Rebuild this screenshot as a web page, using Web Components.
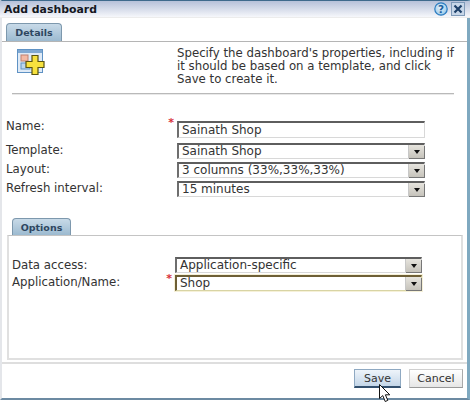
<!DOCTYPE html>
<html><head><meta charset="utf-8"><title>Add dashboard</title>
<style>
html,body{margin:0;padding:0;background:#fff}
body{font:11.75px/13px "DejaVu Sans",sans-serif;color:#3a3a3a;width:470px;height:402px;overflow:hidden}
</style></head><body>
<x-dialog>
  <x-titlebar slot="title">Add dashboard</x-titlebar>
  <x-tabpanel label="Details" variant="outer">
    <x-intro>Specify the dashboard's properties, including if it should be based on a template, and click Save to create it.</x-intro>
    <x-form style="--top:26px;--gap:3px;--col:171px;--w:248px;--pl:4px">
      <x-field label="Name:" required kind="input" value="Sainath Shop" h="17" ly="-3"></x-field>
      <x-field label="Template:" kind="select" value="Sainath Shop"></x-field>
      <x-field label="Layout:" kind="select" value="3 columns (33%,33%,33%)"></x-field>
      <x-field label="Refresh interval:" kind="select" value="15 minutes"></x-field>
    </x-form>
    <x-tabpanel label="Options" variant="inner">
      <x-form style="--top:21px;--gap:2px;--col:163px;--w:247px;--pl:3px">
        <x-field label="Data access:" kind="select" value="Application-specific" ly="0"></x-field>
        <x-field label="Application/Name:" required focused kind="select" value="Shop"></x-field>
      </x-form>
    </x-tabpanel>
  </x-tabpanel>
  <x-footer slot="footer">
    <x-button primary>Save</x-button>
    <x-button>Cancel</x-button>
  </x-footer>
</x-dialog>
<script>
function el(name, css, html){
  customElements.define(name, class extends HTMLElement{
    connectedCallback(){
      if(this.shadowRoot) return;
      const r=this.attachShadow({mode:'open'});
      const a=n=>this.getAttribute(n);
      r.innerHTML='<style>'+css+'</style>'+(typeof html==='function'?html(a,this):html);
    }
  });
}
el('x-dialog',`:host{display:flex;flex-direction:column;box-sizing:border-box;width:470px;height:400px;border-left:2px solid #e4e6ea;border-right:3px solid #7fa9c0;border-bottom:2px solid #6c8aa2;border-top:1px solid #3e6a8c;position:relative;background:#fff}
.m{flex:1;display:flex;flex-direction:column;min-height:0}
.cur{position:absolute;left:376px;top:383px;width:14px;height:19px}`,
`<slot name="title"></slot><div class="m"><slot></slot></div><slot name="footer"></slot>
<svg class="cur" viewBox="0 0 14 19"><path d="M1.5 .5V14.5L4.8 11.6 7.2 17.5 9.8 16.4 7.4 10.8H11.8Z" fill="#fff" stroke="#111" stroke-width="1"/></svg>`);
el('x-titlebar',`:host{display:flex;align-items:center;height:17px;margin-left:-2px;margin-right:-3px;padding:2px 5px 0 4px;background:linear-gradient(#b6c1d9,#d2d9e8 45%,#f6f7fb);border-bottom:1px solid #ececec;box-sizing:border-box;color:#14181f;font:bold 10.9px/14px "DejaVu Sans",sans-serif}
.t{flex:1}.i{display:flex;gap:3px;align-items:center;margin-top:-2px}
svg{display:block}text{font:bold 10.5px "DejaVu Sans",sans-serif}`,
`<span class="t"><slot></slot></span><span class="i">
<svg width="14" height="14" viewBox="0 0 14 14"><defs><radialGradient id="b" cx=".45" cy=".4" r=".7"><stop offset="0" stop-color="#e6f3fb"/><stop offset=".7" stop-color="#a7d0ec"/><stop offset="1" stop-color="#4d98d4"/></radialGradient></defs><circle cx="7" cy="7" r="6.2" fill="url(#b)" stroke="#2b7cc0" stroke-width="1.200"/><text x="7" y="11" text-anchor="middle" fill="#1d5f9e">?</text></svg>
<svg width="14" height="14" viewBox="0 0 14 14"><rect x=".5" y=".5" width="13" height="13" fill="#c7d6e8" stroke="#7f9ab8"/><path d="M3.5 3.5 10.5 10.5M10.5 3.5 3.5 10.5" stroke="#1d3f68" stroke-width="2.200"/></svg></span>`);
el('x-tabpanel',`:host{display:flex;flex-direction:column;min-height:0}
:host([variant=outer]){flex:1;padding-top:5px}
:host([variant=inner]){flex:1;margin:21px 4px 2px 5px}
.tab{align-self:flex-start;box-sizing:border-box;height:18px;border:1px solid #7d98ad;border-bottom:0;border-radius:4px 4px 0 0;background:linear-gradient(#c8dae8,#9cbad0);color:#2e4660;font:bold 9.5px/18px "DejaVu Sans",sans-serif;text-align:center}
:host([variant=outer]) .tab{margin-left:4px;width:56px}
:host([variant=inner]) .tab{margin-left:5px;width:59px;height:17px;line-height:17px}
.b{flex:1;border-top:1px solid #b5b5b5;display:flex;flex-direction:column}
:host([variant=inner]) .b{border:1px solid #e0e0e0;border-top-color:#c4c4c4;border-width:1px 2px 2px 2px}`,
a=>`<div class="tab">${a('label')}</div><div class="b"><slot></slot></div>`);
el('x-intro',`:host{display:block;padding:4px 13px 0 10px}
.r{display:flex;align-items:flex-start}
svg{display:block;margin:3px 0 0 5px}
.x{margin-left:auto;width:277px;padding-top:1px;color:#333}
.h{margin-top:7px;height:2px;background:#b9b9b9;border-bottom:1px solid #e9e9e9;box-sizing:border-box}
`,`<div class="r"><svg width="28" height="28" viewBox="0 0 28 28">
<rect x=".5" y=".5" width="25" height="23" fill="#dfeaf6" stroke="#5f92c4"/><rect x="1" y="1" width="24" height="3" fill="#7fa8d2"/>
<rect x="4" y="6" width="7" height="6" fill="#f4b9a4" stroke="#c08070"/><rect x="4" y="14" width="9" height="6" fill="#bcd6ee" stroke="#5f92c4"/>
<path d="M15 6.500H21V12.500H27V18.500H21V25.500H15V18.500H9V12.500H15Z" fill="#f7e23e" stroke="#5a5410" stroke-width="1.200"/></svg>
<div class="x"><slot></slot></div></div><div class="h"></div>`);
el('x-form',`:host{display:flex;flex-direction:column;padding-top:var(--top);gap:var(--gap)}`,`<slot></slot>`);
el('x-field',`:host{display:grid;grid-template-columns:var(--col) var(--w);align-items:center;padding-left:var(--pl,5px);color:#333}
:host([kind=input]){margin-bottom:2px}
.l{position:relative;line-height:13px}
.s{position:absolute;right:3px;top:-4px;color:#d8303a;font:bold 11px/13px "DejaVu Sans",sans-serif}
.c{box-sizing:border-box;display:flex;align-items:stretch;background:#fff;border:1px solid #d8d8d8;border-top:2px solid #5e5e5e;border-left:2px solid #6e6e6e;color:#333;font-size:12px;line-height:13px}
.v{flex:1;padding-left:3px;white-space:nowrap;overflow:hidden;align-self:center}
.a{width:15px;background:linear-gradient(#e6e4de,#c6c3bb);border-left:1px solid #c8c8c8;box-shadow:1px 1px 0 #777;display:flex;align-items:center;justify-content:center}
.a i{display:block;width:0;height:0;border:3.500px solid transparent;border-top:4px solid #111;border-bottom:0}
.f{border-top-color:#6e5f36;border-left-color:#6e5f36;border-right-color:#d8d4a4;border-bottom-color:#d8d4a4;box-shadow:0 0 0 1px #f6f1d8}`,
(a,t)=>{const sel=a('kind')==='select',h=a('h')||16;const ly=a('ly');
 return `<div class="l" style="top:${ly===null?-1:ly}px">${a('label')}${t.hasAttribute('required')?'<span class="s">*</span>':''}</div>
 <div class="c${t.hasAttribute('focused')?' f':''}" style="height:${h}px"><span class="v">${a('value')}</span>${sel?'<span class="a"><i></i></span>':''}</div>`});
el('x-footer',`:host{display:flex;justify-content:flex-end;gap:8px;box-sizing:border-box;height:36px;padding:5px 4px 0 0;border-top:2px solid #dedede;align-items:flex-start}`,`<slot></slot>`);
el('x-button',`:host{display:block;box-sizing:border-box;height:19px;width:54px;text-align:center;font:11px/17px "DejaVu Sans",sans-serif;color:#333;border:1px solid #d0d0d0;border-right-color:#aaa;border-bottom-color:#999;background:linear-gradient(#fff,#e6e6e6)}
:host([primary]){width:47px;border-color:#8fa9c2;border-bottom:2px solid #33506e;background:linear-gradient(#eef4fa,#c4d6e8)}`,`<slot></slot>`);
</script>
</body></html>
